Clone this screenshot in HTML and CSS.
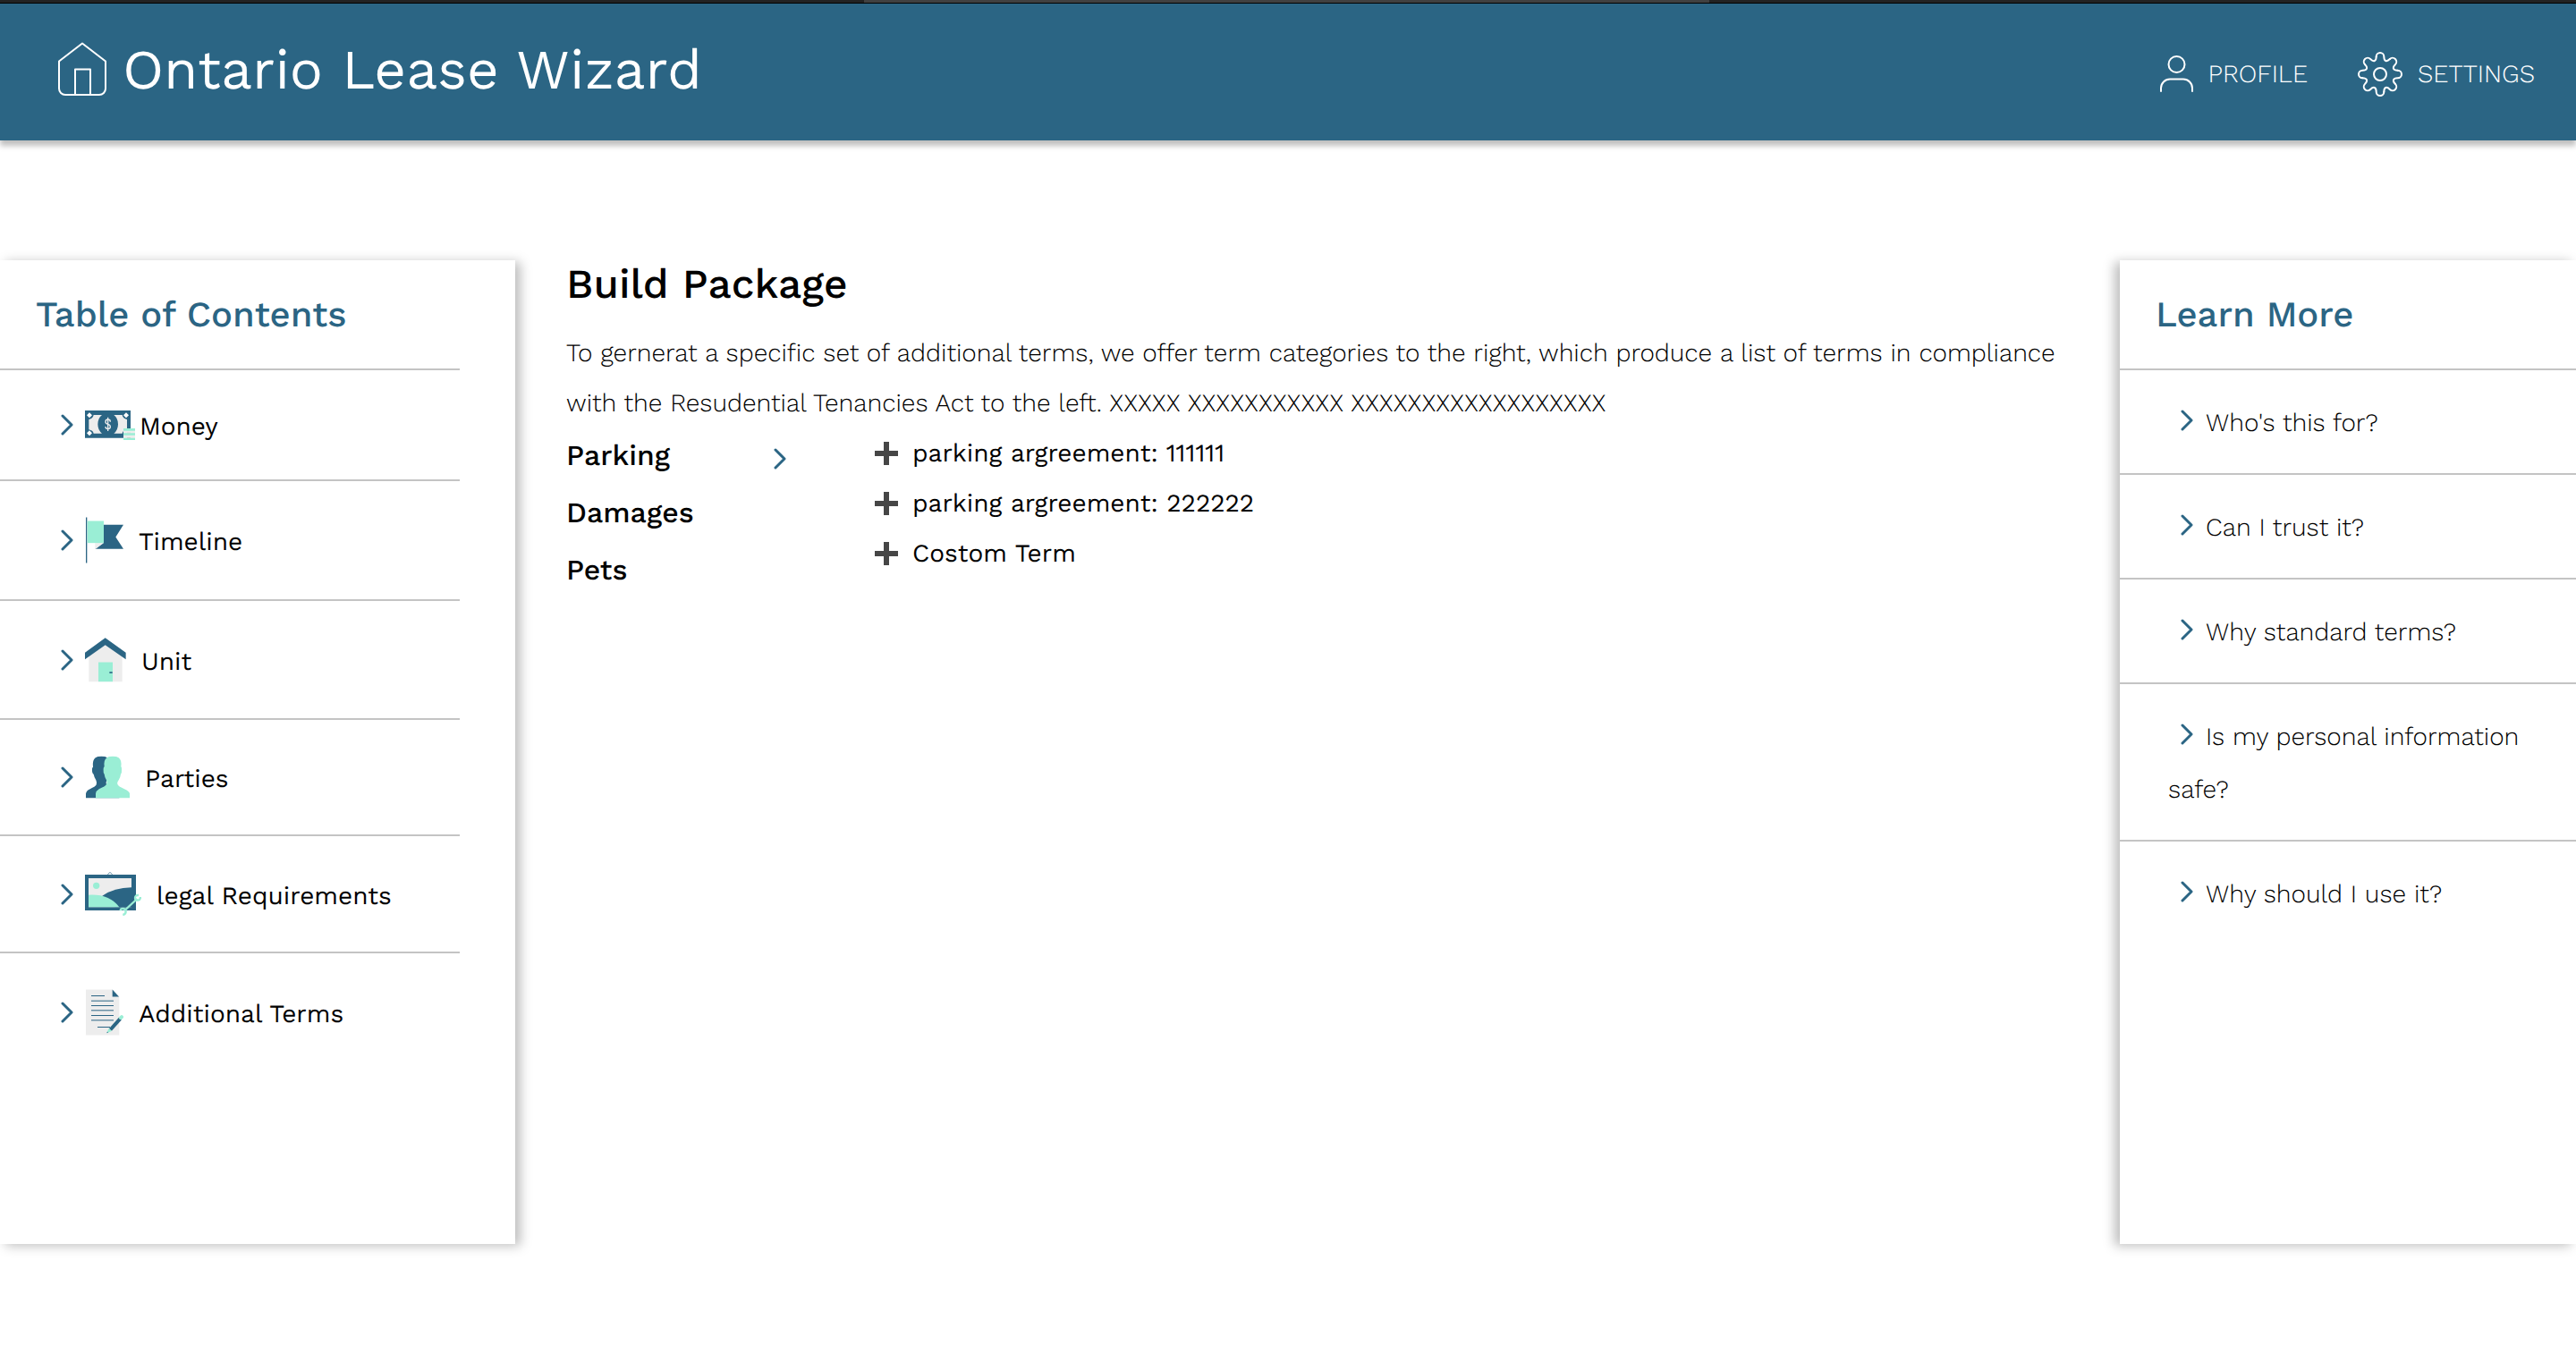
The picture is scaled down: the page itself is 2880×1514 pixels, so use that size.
FILE: index.html
```html
<!DOCTYPE html>
<html lang="en">
<head>
<meta charset="utf-8">
<meta name="viewport" content="width=device-width, initial-scale=1">
<title>Ontario Lease Wizard</title>
<link rel="stylesheet" href="styles.css">
</head>
<body>
<svg class="defs" aria-hidden="true">
  <symbol id="chevron" viewBox="0 0 14 24"><path d="M2 2l10 10L2 22" fill="none" stroke="#2b6584" stroke-width="3" stroke-linecap="round" stroke-linejoin="round"/></symbol>
  <symbol id="plus" viewBox="0 0 28 28"><path d="M11 1h6v10h10v6H17v10h-6V17H1v-6h10z" fill="#464646"/></symbol>
</svg>
<div class="strip"></div>
<header class="header">
  <a class="brand" href="#">
    <svg class="brand-icon" viewBox="0 0 54 64" fill="none" stroke="#fff" stroke-width="2" stroke-linejoin="round"><path d="M27 1.500L53 21.500V52a7 7 0 0 1-7 7H8a7 7 0 0 1-7-7V21.500zM19 59V30.500h17V59"/></svg>
    <span class="brand-name">Ontario Lease Wizard</span>
  </a>
  <nav class="nav">
    <a class="nav-link" href="#profile">
      <svg class="nav-profile" viewBox="0 0 37 41" fill="none" stroke="#fff" stroke-width="2" stroke-linecap="round"><circle cx="18.500" cy="10" r="9"/><path d="M1 40v-3.500a10 10 0 0 1 10-10h15a10 10 0 0 1 10 10V40"/></svg>
      PROFILE
    </a>
    <a class="nav-link" href="#settings">
      <svg class="nav-settings" viewBox="0 0 50 50" fill="none" stroke="#fff" stroke-width="2" stroke-linecap="round">
        <path id="tooth" d="M20.700 5.300A4.300 4.300 0 0 1 29.300 5.300C29.300 10.600 32.300 11.600 35.890 8.030"/>
        <use href="#tooth" transform="rotate(45 25 25)"/><use href="#tooth" transform="rotate(90 25 25)"/><use href="#tooth" transform="rotate(135 25 25)"/><use href="#tooth" transform="rotate(180 25 25)"/><use href="#tooth" transform="rotate(225 25 25)"/><use href="#tooth" transform="rotate(270 25 25)"/><use href="#tooth" transform="rotate(315 25 25)"/>
        <circle cx="25" cy="25" r="7"/>
      </svg>
      SETTINGS
    </a>
  </nav>
</header>

<div class="layout">
  <aside class="panel panel-left">
    <h2 class="panel-title toc-title">Table of Contents</h2>
    <ul class="toc">
      <li class="toc-item"><a class="toc-link" href="#money">
        <svg class="chevron"><use href="#chevron"/></svg>
        <svg class="icon icon-money" viewBox="105 57 168 99">
          <path fill="#2b6584" d="M105 57h153v92H105z"/>
          <path fill="#ededed" d="M134 72h28q-14 11-14 31t14 31h-28q-2-10-16-13V87q14-3 16-15zM202 72h28q2 12 16 15v34q-14 3-16 13h-28q14-11 14-31t-14-31z"/>
          <g fill="#fff"><path d="M120 64l9 9-9 9-9-9zM243 64l9 9-9 9-9-9zM120 124l9 9-9 9-9-9z"/></g>
          <path fill="none" stroke="#ededed" stroke-width="4" d="M190 95q0-8-8-8t-8 8q0 6 8 8t8 9q0 7-8 7t-8-8M182 80v46"/>
          <path fill="#ededed" d="M234 117h39v39h-39z"/>
          <path fill="#9aeed5" d="M234 117h39v8h-39zM234 133h39v7h-39zM234 149h39v7h-39z"/>
          <path fill="#c9c9c9" d="M246 131h12v2h-12zM246 147h12v2h-12z"/>
        </svg>
        <span class="toc-label">Money</span></a></li>
      <li class="toc-item"><a class="toc-link" href="#timeline">
        <svg class="chevron"><use href="#chevron"/></svg>
        <svg class="icon icon-flag" viewBox="108 417 126 153">
          <path fill="#2b6584" d="M139 523l28-20v-61h67l-26 41 26 40zM108 417h4v153h-4z"/>
          <path fill="#ededed" d="M139 503h28l-25 19h-3z"/>
          <path fill="#9aeed5" d="M113 429h55v74h-55z"/>
        </svg>
        <span class="toc-label">Timeline</span></a></li>
      <li class="toc-item"><a class="toc-link" href="#unit">
        <svg class="chevron"><use href="#chevron"/></svg>
        <svg class="icon icon-house" viewBox="105 38 138 148">
          <path fill="#ededed" d="M118 95l55-38 57 38v91H118z"/>
          <path fill="#2b6584" d="M173 39l69 50v22l-69-48-68 48V89z"/>
          <path fill="#9aeed5" d="M150 121h48v65h-48z"/>
          <path fill="#2b6584" d="M187 153h10v5h-10z"/>
        </svg>
        <span class="toc-label">Unit</span></a></li>
      <li class="toc-item"><a class="toc-link" href="#parties">
        <svg class="chevron"><use href="#chevron"/></svg>
        <svg class="icon icon-people" viewBox="108 437 147 141">
          <path fill="#2b6584" d="M108 577v-14q1-10 14-16 18-8 21-14 3-7-1-16-6-8-8-19-6-4-5-18 0-4 3-6-3-24 8-32 6-4 20-4t20 4q11 8 8 32 3 2 3 6 1 14-5 18-2 11-8 19-4 9-1 16 3 6 21 14 22 8 22 16v14z"/>
          <path fill="#9aeed5" d="M141 577v-14q1-10 11-16 20-8 24-14 5-8 1-16-6-8-7-19-4-6-3-12-1-12 3-14-3-22 8-30 6-4 20-4t20 4q11 8 8 30 3 2 2 14 1 6-3 12-1 11-7 19-7 9-3 16 3 6 22 14 18 8 18 16v14z"/>
        </svg>
        <span class="toc-label">Parties</span></a></li>
      <li class="toc-item"><a class="toc-link" href="#legal">
        <svg class="chevron"><use href="#chevron"/></svg>
        <svg class="icon icon-picture" viewBox="105 48 189 147">
          <path fill="none" stroke="#2b6584" stroke-width="2" d="M180 59l5-7q4-5 8 0l5 7"/>
          <path fill="#2b6584" d="M105 57h171v120H105z"/>
          <path fill="#ededed" d="M117 69h144v97H117z"/>
          <path fill="#2b6584" d="M163 128q40-27 98-28v66h-55z"/>
          <path fill="#9aeed5" d="M117 125q70-4 103 41H117z"/>
          <circle fill="#9aeed5" cx="143" cy="94" r="11"/>
          <path stroke="#9aeed5" stroke-width="7" d="M237 178l43-40"/>
          <path fill="none" stroke="#9aeed5" stroke-width="7" d="M285 126q-12-1-12 9 1 9 10 8 8-1 8-11M224 178q0-7 8-7 10 0 10 10 0 9-10 11"/>
        </svg>
        <span class="toc-label">legal Requirements</span></a></li>
      <li class="toc-item"><a class="toc-link" href="#additional">
        <svg class="chevron"><use href="#chevron"/></svg>
        <svg class="icon icon-doc" viewBox="108 441 126 153">
          <path fill="#ededed" d="M108 441h89l23 24v129H108z"/>
          <path fill="#2b6584" d="M197 441l22 24h-22z"/>
          <path fill="none" stroke="#2b6584" stroke-width="3" d="M126 462h45M126 479h75M126 495h75M126 511h75M126 528h75M126 544h75M147 567h42"/>
          <path stroke="#2b6584" stroke-width="12" d="M190 576l33-37"/>
          <path stroke="#9aeed5" stroke-width="12" stroke-linecap="round" d="M225 536l3-3"/>
          <path fill="#9aeed5" d="M185 571l10 9-17 7z"/>
          <path fill="#2b6584" d="M180 582l3 3-5 2z"/>
        </svg>
        <span class="toc-label">Additional Terms</span></a></li>
    </ul>
  </aside>

  <main class="content">
    <h1 class="page-title">Build Package</h1>
    <p class="intro">To gernerat a specific set of additional terms, we offer term categories to the right, which produce a list of terms in compliance with the Resudential Tenancies Act to the left. XXXXX XXXXXXXXXXX XXXXXXXXXXXXXXXXXX</p>
    <div class="builder">
      <ul class="categories">
        <li><button class="category" type="button"><span class="category-name">Parking</span><svg class="category-arrow" viewBox="0 0 14 32"><path d="M2 10l10 10L2 30" fill="none" stroke="#2b6584" stroke-width="3" stroke-linecap="round" stroke-linejoin="round"/></svg></button></li>
        <li><button class="category" type="button"><span class="category-name">Damages</span></button></li>
        <li><button class="category" type="button"><span class="category-name">Pets</span></button></li>
      </ul>
      <ul class="terms">
        <li><button class="term" type="button"><svg class="plus"><use href="#plus"/></svg>parking argreement: 111111</button></li>
        <li><button class="term" type="button"><svg class="plus"><use href="#plus"/></svg>parking argreement: 222222</button></li>
        <li><button class="term" type="button"><svg class="plus"><use href="#plus"/></svg>Costom Term</button></li>
      </ul>
    </div>
  </main>

  <aside class="panel panel-right">
    <h2 class="panel-title">Learn More</h2>
    <ul class="faq">
      <li class="faq-item"><a href="#who"><svg class="chevron faq-chevron"><use href="#chevron"/></svg>Who's this for?</a></li>
      <li class="faq-item"><a href="#trust"><svg class="chevron faq-chevron"><use href="#chevron"/></svg>Can I trust it?</a></li>
      <li class="faq-item"><a href="#terms"><svg class="chevron faq-chevron"><use href="#chevron"/></svg>Why standard terms?</a></li>
      <li class="faq-item"><a href="#safe"><svg class="chevron faq-chevron"><use href="#chevron"/></svg>Is my personal information safe?</a></li>
      <li class="faq-item"><a href="#why"><svg class="chevron faq-chevron"><use href="#chevron"/></svg>Why should I use it?</a></li>
    </ul>
  </aside>
</div>
</body>
</html>
```
FILE: styles.css
```css
* { box-sizing: border-box; }

body {
  margin: 0;
  min-height: 100vh;
  display: flex;
  flex-direction: column;
  background: #fff;
  color: #000;
  font-family: "Work Sans", Inter, sans-serif;
  font-size: 28px;
  text-rendering: geometricPrecision;
}

ul { margin: 0; padding: 0; list-style: none; }
a { color: inherit; text-decoration: none; }
svg { flex: none; }
button { padding: 0; border: 0; background: none; color: inherit; font: inherit; text-rendering: inherit; cursor: pointer; }

.defs { display: none; }

/* Top strip and header */
.strip {
  height: 4px;
  border-bottom: 1px solid #000;
  background: linear-gradient(90deg, #232323 33.55%, #414141 33.55%, #414141 66.35%, #232323 66.35%);
}

.header {
  position: relative;
  display: flex;
  justify-content: space-between;
  align-items: center;
  padding: 38px 46px 42px 65px;
  background: #2b6584;
  color: #fff;
  box-shadow: 0 6px 6px rgba(0, 0, 0, 0.25);
}

.brand { display: flex; align-items: center; gap: 18px; }
.brand-icon { width: 54px; height: 64px; }
.brand-name { font-size: 62px; line-height: 73px; }

.nav { display: flex; gap: 56px; padding-top: 8px; }
.nav-link { display: flex; align-items: center; gap: 17px; font-weight: 300; }
.nav-profile { width: 37px; height: 41px; }
.nav-settings { width: 50px; height: 50px; }

/* Three columns */
.layout {
  flex: 1;
  display: grid;
  grid-template-columns: 20% 1fr 510px;
  padding: 134px 0 123px;
}

.panel { background: #fff; }
.panel-left { box-shadow: 6px 2px 12px rgba(0, 0, 0, 0.26); }
.panel-right { box-shadow: -6px 2px 12px rgba(0, 0, 0, 0.26); }

.panel-title {
  margin: 0;
  padding: 36px 40px 35px;
  border-bottom: 2px solid #c4c4c4;
  color: #2b6584;
  font-size: 40px;
  font-weight: 500;
  line-height: 50px;
}

.chevron { width: 14px; height: 24px; }

/* Table of contents */
.toc, .toc-title { margin-right: 62px; }
.toc-item { border-bottom: 2px solid #c4c4c4; }
.toc-item:last-child { border-bottom: 0; }
.toc-link { display: flex; align-items: center; padding: 40px 0 40px 68px; }
.toc-label { padding-top: 4px; line-height: 38px; }
.icon { margin: 0 17px 0 14px; }
.icon-money { width: 56px; height: 33px; margin: 0 5px 0 13px; }
.icon-flag { width: 42px; height: 52px; }
.icon-house { width: 46px; height: 51px; margin-left: 13px; }
.icon-people { width: 49px; height: 48px; }
.icon-picture { width: 63px; height: 49px; margin-left: 13px; }
.icon-doc { width: 42px; height: 52px; }

/* Package builder */
.content { padding: 0 56px 0 57px; }
.page-title { margin: 0 0 22px; font-size: 46px; font-weight: 500; line-height: 54px; }
.intro { margin: 0; font-weight: 300; line-height: 56px; }
.builder { display: grid; grid-template-columns: 344px 1fr; align-items: start; }
.categories { display: grid; gap: 4px; }
.category { display: flex; align-items: center; font-size: 32px; font-weight: 500; line-height: 60px; }
.category-name { min-width: 232px; text-align: left; }
.category-arrow { width: 14px; height: 32px; }
.term { display: flex; align-items: center; gap: 15px; line-height: 56px; }
.plus { width: 28px; height: 28px; }

/* Learn more */
.faq-item { padding: 29px 40px 27px 54px; border-bottom: 2px solid #c4c4c4; font-weight: 300; line-height: 59px; }
.faq-item:last-child { border-bottom: 0; }
.faq-chevron { margin: 0 14px; }
```
